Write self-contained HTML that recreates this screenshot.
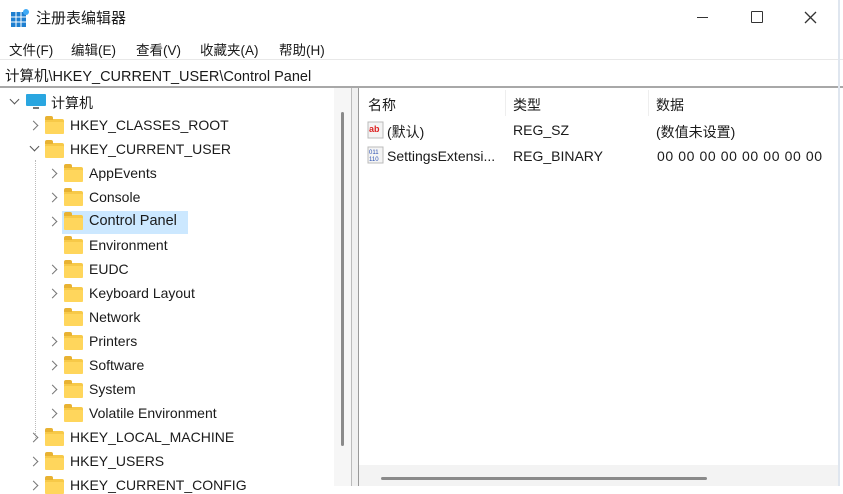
<!DOCTYPE html>
<html><head><meta charset="utf-8"><style>
*{margin:0;padding:0;box-sizing:border-box}
body{width:843px;height:486px;overflow:hidden;background:#fff;font-family:"Liberation Sans","Noto Sans CJK SC",sans-serif;font-size:14px;color:#1a1a1a;position:relative}
.a{position:absolute;white-space:nowrap}
.f{position:absolute;width:19px;height:15px;background:#f7c948;border-radius:2px}
.f:before{content:"";position:absolute;left:0;top:-3px;width:8px;height:4px;background:#e8b232;border-radius:2px 2px 0 0}
.f:after{content:"";position:absolute;left:0;top:3px;width:19px;height:12px;background:#ffd65c;border-radius:1px}
.c{position:absolute;width:7px;height:7px;border-right:1.5px solid #777;border-bottom:1.5px solid #777;transform:rotate(-45deg)}
.d{position:absolute;width:7px;height:7px;border-right:1.5px solid #555;border-bottom:1.5px solid #555;transform:rotate(45deg)}
.m{position:absolute;top:39px;font-size:13.5px}
.r{font-size:14px}
</style></head><body>
<svg class="a" style="left:10px;top:8px" width="20" height="20"><rect x="1" y="4" width="15" height="15" fill="#1e7fd0"/><g stroke="#fff" stroke-width="1"><line x1="1" y1="9" x2="16" y2="9"/><line x1="1" y1="14" x2="16" y2="14"/><line x1="6" y1="4" x2="6" y2="19"/><line x1="11" y1="4" x2="11" y2="19"/></g><circle cx="16" cy="4" r="3" fill="#3fa9f5"/></svg>
<div class="a" style="left:36px;top:7px;font-size:15px">注册表编辑器</div>
<div class="a" style="left:697px;top:17px;width:11px;height:1px;background:#333"></div>
<div class="a" style="left:751px;top:11px;width:12px;height:12px;border:1.3px solid #333;border-radius:1px"></div>
<svg class="a" style="left:804px;top:11px" width="13" height="13"><path d="M1 1L12 12M12 1L1 12" stroke="#333" stroke-width="1.3"/></svg>
<div class="m" style="left:9px">文件(F)</div>
<div class="m" style="left:71px">编辑(E)</div>
<div class="m" style="left:136px">查看(V)</div>
<div class="m" style="left:200px">收藏夹(A)</div>
<div class="m" style="left:279px">帮助(H)</div>
<div class="a" style="left:0;top:59px;width:843px;height:1px;background:#e8e8e8"></div>
<div class="a" style="left:5px;top:65px;font-size:14.5px">计算机\HKEY_CURRENT_USER\Control Panel</div>
<div class="a" style="left:0;top:86px;width:843px;height:2px;background:#a8a8a8"></div>
<div class="a" style="left:838px;top:0;width:2px;height:486px;background:#dfe6ef"></div>
<div class="a" style="left:334px;top:88px;width:18px;height:398px;background:#f6f6f6"></div>
<div class="a" style="left:341px;top:112px;width:3px;height:334px;background:#8a8a8a;border-radius:2px"></div>
<div class="a" style="left:351px;top:88px;width:1px;height:398px;background:#bbb"></div>
<div class="a" style="left:352px;top:88px;width:6px;height:398px;background:#f0f0f0"></div>
<div class="a" style="left:358px;top:88px;width:1px;height:398px;background:#999"></div>
<div class="a" style="left:35px;top:160px;height:280px;border-left:1px dotted #bbb"></div>
<div class="d" style="left:11px;top:96px"></div>
<svg class="a" style="left:25px;top:93px" width="22" height="18"><rect x="1" y="1" width="20" height="12" fill="#2aa6e0" rx="1"/><rect x="8" y="14" width="6" height="2" fill="#777"/></svg>
<div class="a" style="left:51px;top:93px">计算机</div>
<div class="c" style="left:30px;top:122px"></div><div class="f" style="left:45px;top:119px"></div><div class="a" style="left:70px;top:117px">HKEY_CLASSES_ROOT</div>
<div class="d" style="left:31px;top:143px"></div><div class="f" style="left:45px;top:143px"></div><div class="a" style="left:70px;top:141px">HKEY_CURRENT_USER</div>
<div class="a" style="left:62px;top:211px;width:126px;height:23px;background:#cce8ff"></div>
<div class="c" style="left:49px;top:170px"></div><div class="f" style="left:64px;top:167px"></div><div class="a" style="left:89px;top:165px">AppEvents</div>
<div class="c" style="left:49px;top:194px"></div><div class="f" style="left:64px;top:191px"></div><div class="a" style="left:89px;top:189px">Console</div>
<div class="c" style="left:49px;top:218px"></div><div class="f" style="left:64px;top:215px"></div><div class="a" style="left:89px;top:213px;font-size:14.5px">Control Panel</div>
<div class="f" style="left:64px;top:239px"></div><div class="a" style="left:89px;top:237px">Environment</div>
<div class="c" style="left:49px;top:266px"></div><div class="f" style="left:64px;top:263px"></div><div class="a" style="left:89px;top:261px">EUDC</div>
<div class="c" style="left:49px;top:290px"></div><div class="f" style="left:64px;top:287px"></div><div class="a" style="left:89px;top:285px">Keyboard Layout</div>
<div class="f" style="left:64px;top:311px"></div><div class="a" style="left:89px;top:309px">Network</div>
<div class="c" style="left:49px;top:338px"></div><div class="f" style="left:64px;top:335px"></div><div class="a" style="left:89px;top:333px">Printers</div>
<div class="c" style="left:49px;top:362px"></div><div class="f" style="left:64px;top:359px"></div><div class="a" style="left:89px;top:357px">Software</div>
<div class="c" style="left:49px;top:386px"></div><div class="f" style="left:64px;top:383px"></div><div class="a" style="left:89px;top:381px">System</div>
<div class="c" style="left:49px;top:410px"></div><div class="f" style="left:64px;top:407px"></div><div class="a" style="left:89px;top:405px">Volatile Environment</div>
<div class="c" style="left:30px;top:434px"></div><div class="f" style="left:45px;top:431px"></div><div class="a" style="left:70px;top:429px">HKEY_LOCAL_MACHINE</div>
<div class="c" style="left:30px;top:458px"></div><div class="f" style="left:45px;top:455px"></div><div class="a" style="left:70px;top:453px">HKEY_USERS</div>
<div class="c" style="left:30px;top:482px"></div><div class="f" style="left:45px;top:479px"></div><div class="a" style="left:70px;top:477px">HKEY_CURRENT_CONFIG</div>
<div class="a r" style="left:368px;top:95px">名称</div>
<div class="a" style="left:505px;top:90px;width:1px;height:26px;background:#eee"></div>
<div class="a r" style="left:513px;top:95px">类型</div>
<div class="a" style="left:648px;top:90px;width:1px;height:26px;background:#eee"></div>
<div class="a r" style="left:656px;top:95px">数据</div>
<svg class="a" style="left:367px;top:121px" width="18" height="18"><rect x="1" y="1" width="15" height="16" fill="#f4f4f4" stroke="#bbb"/><text x="2" y="11" font-size="9" font-weight="bold" fill="#d22" font-family="Liberation Sans">ab</text></svg>
<div class="a r" style="left:387px;top:122px">(默认)</div>
<div class="a r" style="left:513px;top:122px">REG_SZ</div>
<div class="a r" style="left:656px;top:122px">(数值未设置)</div>
<svg class="a" style="left:367px;top:146px" width="18" height="18"><rect x="1" y="1" width="15" height="16" fill="#f4f4f4" stroke="#bbb"/><text x="2" y="8" font-size="6" fill="#2a4fb0" font-family="Liberation Sans">011</text><text x="2" y="15" font-size="6" fill="#2a4fb0" font-family="Liberation Sans">110</text></svg>
<div class="a r" style="left:387px;top:148px">SettingsExtensi...</div>
<div class="a r" style="left:513px;top:148px">REG_BINARY</div>
<div class="a r" style="left:657px;top:148px;letter-spacing:0.6px">00 00 00 00 00 00 00 00</div>
<div class="a" style="left:359px;top:465px;width:479px;height:21px;background:#f3f3f3"></div>
<div class="a" style="left:381px;top:477px;width:326px;height:3px;background:#8a8a8a;border-radius:2px"></div>
</body></html>
